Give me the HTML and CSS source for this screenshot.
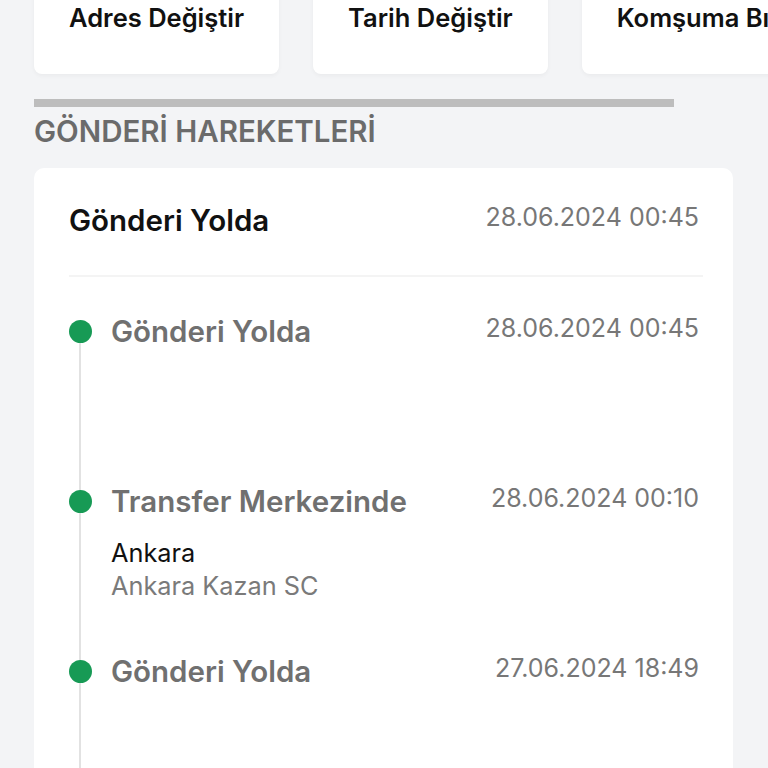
FILE: index.html
```html
<!DOCTYPE html>
<html lang="tr">
<head>
    <meta charset="UTF-8">
    <meta name="viewport" content="width=device-width, initial-scale=1.0">
    <title>Gönderi Hareketleri</title>
    <link rel="stylesheet" href="styles.css">
</head>
<body>
    <div class="actions">
        <div class="action-card">Adres Değiştir</div>
        <div class="action-card">Tarih Değiştir</div>
        <div class="action-card">Komşuma Bırak</div>
    </div>

    <div class="bar"></div>
    <h2 class="section-title">GÖNDERİ HAREKETLERİ</h2>

    <div class="moves-card">
        <div class="moves-header">
            <span class="header-status">Gönderi Yolda</span>
            <span class="date">28.06.2024 00:45</span>
        </div>
        <ul class="timeline">
            <li class="step first">
                <span class="dot"></span>
                <div class="step-body">
                    <div class="step-row">
                        <span class="step-title">Gönderi Yolda</span>
                        <span class="date">28.06.2024 00:45</span>
                    </div>
                </div>
            </li>
            <li class="step">
                <span class="dot"></span>
                <div class="step-body">
                    <div class="step-row">
                        <span class="step-title">Transfer Merkezinde</span>
                        <span class="date">28.06.2024 00:10</span>
                    </div>
                    <div class="city">Ankara</div>
                    <div class="branch">Ankara Kazan SC</div>
                </div>
            </li>
            <li class="step">
                <span class="dot"></span>
                <div class="step-body">
                    <div class="step-row">
                        <span class="step-title">Gönderi Yolda</span>
                        <span class="date">27.06.2024 18:49</span>
                    </div>
                </div>
            </li>
        </ul>
    </div>
</body>
</html>
```

FILE: styles.css
```css
body {
    margin: 0;
    font-family: Inter, "Noto Sans", sans-serif;
    background-color: #f3f4f6;
    padding: 0 0 0 34px;
    overflow: hidden;
}
.actions {
    display: flex;
    gap: 34px;
    margin-top: -40px;
    white-space: nowrap;
}
.action-card {
    flex: none;
    background-color: #ffffff;
    border-radius: 8px;
    padding: 40px 35px 38px;
    font-size: 25.5px;
    line-height: 36px;
    font-weight: 600;
    color: #111111;
    box-shadow: 0 2px 4px rgba(0, 0, 0, 0.04);
}
.bar {
    width: 640px;
    height: 8px;
    margin-top: 25px;
    background-color: #bdbdbd;
}
.section-title {
    margin: 6px 0 0;
    font-size: 29.5px;
    line-height: 36px;
    font-weight: 600;
    color: #6b6b6b;
}
.moves-card {
    width: 699px;
    box-sizing: border-box;
    margin-top: 19px;
    padding: 0 30px 0 35px;
    background-color: #ffffff;
    border-radius: 10px 10px 0 0;
    min-height: 620px;
}
.moves-header {
    display: flex;
    justify-content: space-between;
    align-items: flex-start;
    padding: 36px 4px 39px 0;
    border-bottom: 2px solid #f4f4f4;
}
.header-status {
    font-size: 29.5px;
    line-height: 32px;
    font-weight: 600;
    color: #111111;
}
.date {
    font-size: 25px;
    line-height: 27px;
    color: #777777;
}
.timeline {
    list-style: none;
    margin: 0;
    padding: 38px 0 0;
}
.step {
    position: relative;
    display: flex;
    gap: 19px;
    min-height: 170px;
}
.step::before {
    content: "";
    position: absolute;
    left: 10px;
    top: 0;
    bottom: 0;
    width: 2px;
    background-color: #e2e2e2;
}
.step.first::before {
    top: 16px;
}
.dot {
    position: relative;
    flex: none;
    width: 23px;
    height: 23px;
    margin-top: 5px;
    border-radius: 50%;
    background-color: #179a55;
}
.step-body {
    flex: 1;
}
.step-row {
    display: flex;
    justify-content: space-between;
    align-items: flex-start;
    padding-right: 4px;
}
.step-title {
    font-size: 29.5px;
    line-height: 32px;
    font-weight: 600;
    color: #707070;
}
.city {
    margin-top: 19px;
    font-size: 25.3px;
    line-height: 33px;
    color: #111111;
}
.branch {
    font-size: 25.3px;
    line-height: 33px;
    color: #7a7a7a;
}
```
